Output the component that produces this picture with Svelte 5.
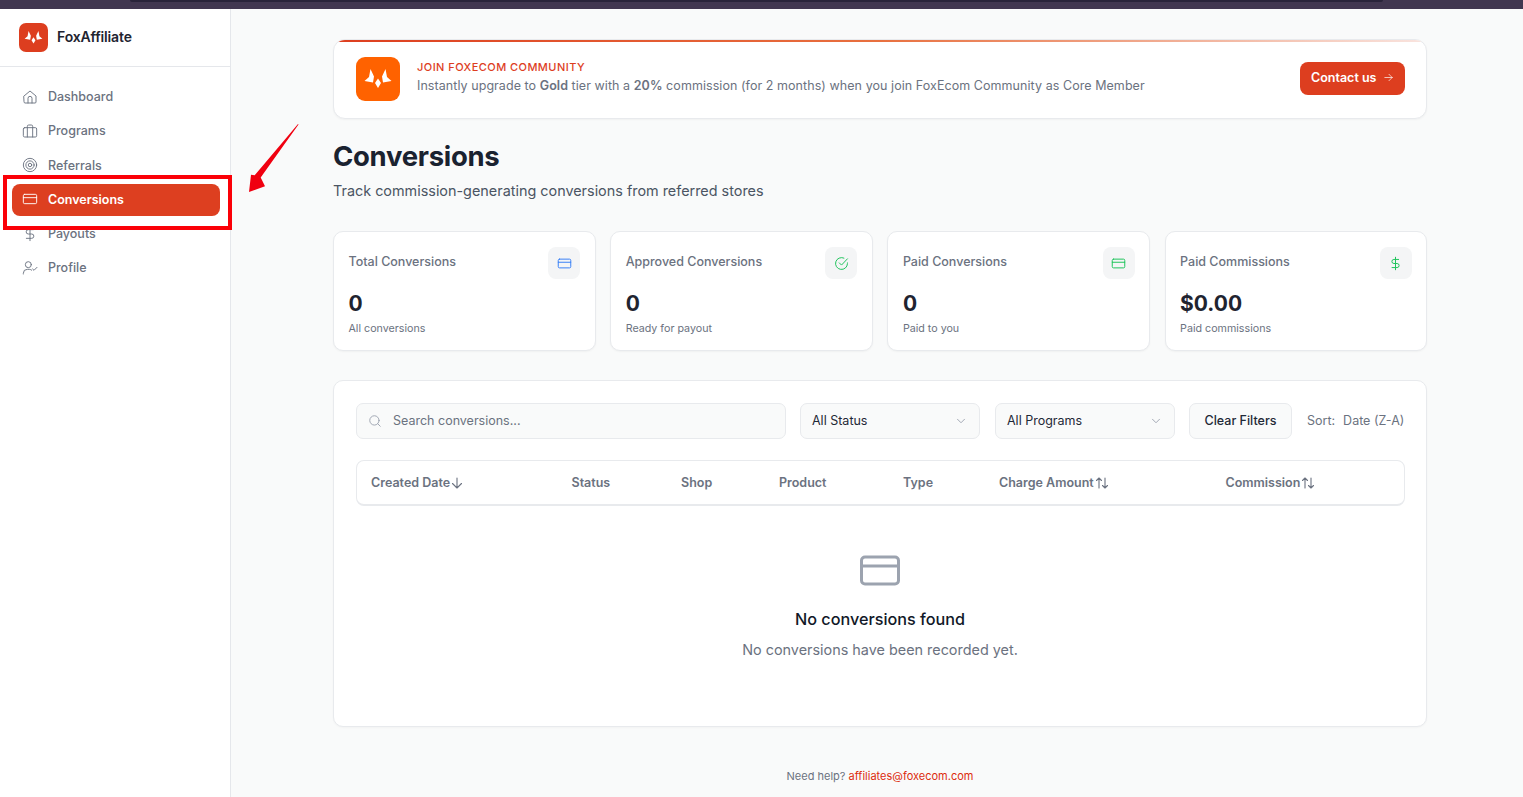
<script lang="ts">
  const nav = [
    { label: "Dashboard", icon: "home" },
    { label: "Programs", icon: "case" },
    { label: "Referrals", icon: "target" },
    { label: "Conversions", icon: "card", active: true },
    { label: "Payouts", icon: "dollar" },
    { label: "Profile", icon: "user" },
  ];

  const stats = [
    { title: "Total Conversions", value: "0", note: "All conversions", icon: "card", color: "#3b82f6" },
    { title: "Approved Conversions", value: "0", note: "Ready for payout", icon: "check", color: "#22c55e" },
    { title: "Paid Conversions", value: "0", note: "Paid to you", icon: "card", color: "#22c55e" },
    { title: "Paid Commissions", value: "$0.00", note: "Paid commissions", icon: "dollar", color: "#22c55e" },
  ];

  const columns = [
    { label: "Created Date", sort: "down", width: 200.5 },
    { label: "Status", width: 109.5 },
    { label: "Shop", width: 98 },
    { label: "Product", width: 124 },
    { label: "Type", width: 96 },
    { label: "Charge Amount", sort: "both", width: 226.5 },
    { label: "Commission", sort: "both", width: 150 },
  ];
</script>

{#snippet icon(name: string)}
  <svg viewBox="0 0 24 24" fill="none" stroke="currentColor" stroke-width="1.6" stroke-linecap="round" stroke-linejoin="round">
    {#if name === "home"}
      <path d="M3 10.500 12 3l9 7.500V19.500a1.500 1.500 0 0 1-1.500 1.500h-15A1.500 1.500 0 0 1 3 19.500z" />
      <path d="M9 21v-7a3 3 0 0 1 6 0v7" />
    {:else if name === "case"}
      <rect x="2" y="7" width="20" height="14" rx="2" />
      <path d="M8 21V5a2 2 0 0 1 2-2h4a2 2 0 0 1 2 2v16" />
    {:else if name === "target"}
      <circle cx="12" cy="12" r="10" />
      <circle cx="12" cy="12" r="6.200" />
      <circle cx="12" cy="12" r="2.600" />
    {:else if name === "card"}
      <rect x="2" y="5" width="20" height="14" rx="2" />
      <path d="M2 10h20" />
    {:else if name === "dollar"}
      <path d="M12 2v20" />
      <path d="M17 5.500H9.500a3.250 3.250 0 0 0 0 6.500h5a3.250 3.250 0 0 1 0 6.500H6.500" />
    {:else if name === "user"}
      <circle cx="9.500" cy="7" r="4.500" />
      <path d="M2 21v-1a6 6 0 0 1 6-6h3a6 6 0 0 1 3.500 1.200" />
      <path d="m16 13.500 2 2 4.500-4.500" />
    {:else if name === "check"}
      <path d="M21.500 11v1a9.500 9.500 0 1 1-5.600-8.700" />
      <path d="m8.500 11 3.500 3.500 9.500-10" />
    {/if}
  </svg>
{/snippet}

{#snippet foxMark()}
  <svg class="fox" viewBox="0 0 44 44" fill="#fff">
    <polygon points="14.500,12 18,19.500 17,25.500 8.500,24 13,20" />
    <polygon points="29.500,12 26,19.500 27,25.500 35.500,24 31,20" />
    <polygon points="22,21.500 25,26 22,31 19,26" />
  </svg>
{/snippet}

<div class="page">
  <div class="topbar"><div class="topbar-inner"></div></div>

  <div class="layout">
    <aside class="sidebar">
      <div class="brand">
        <div class="brand-logo">{@render foxMark()}</div>
        <span class="brand-name">FoxAffiliate</span>
      </div>
      <nav class="nav">
        {#each nav as item}
          <div class="nav-item" class:active={item.active}>
            {@render icon(item.icon)}
            <span>{item.label}</span>
          </div>
        {/each}
      </nav>
    </aside>

    <main class="main">
      <section class="banner">
        <div class="banner-logo">{@render foxMark()}</div>
        <div class="banner-text">
          <div class="banner-title">JOIN FOXECOM COMMUNITY</div>
          <div class="banner-desc">
            Instantly upgrade to <strong>Gold</strong> tier with a <strong>20%</strong> commission (for 2 months) when you join FoxEcom Community as Core Member
          </div>
        </div>
        <button class="contact">
          Contact us
          <svg viewBox="0 0 24 24" fill="none" stroke="currentColor" stroke-width="2" stroke-linecap="round" stroke-linejoin="round"><path d="M4 12h16M13 5l7 7-7 7" /></svg>
        </button>
      </section>

      <h1>Conversions</h1>
      <p class="subtitle">Track commission-generating conversions from referred stores</p>

      <section class="stats">
        {#each stats as s}
          <div class="stat">
            <div class="stat-head">
              <span class="stat-title">{s.title}</span>
              <div class="stat-icon" style="color: {s.color}">{@render icon(s.icon)}</div>
            </div>
            <div class="stat-value">{s.value}</div>
            <div class="stat-note">{s.note}</div>
          </div>
        {/each}
      </section>

      <section class="panel">
        <div class="filters">
          <div class="search">
            <svg viewBox="0 0 24 24" fill="none" stroke="currentColor" stroke-width="1.6" stroke-linecap="round"><circle cx="11" cy="11" r="8" /><path d="m21 21-4.300-4.300" /></svg>
            <span>Search conversions...</span>
          </div>
          <div class="select status">
            <span>All Status</span>
            <svg viewBox="0 0 24 24" fill="none" stroke="currentColor" stroke-width="1.600" stroke-linecap="round" stroke-linejoin="round"><path d="m6 9 6 6 6-6" /></svg>
          </div>
          <div class="select programs">
            <span>All Programs</span>
            <svg viewBox="0 0 24 24" fill="none" stroke="currentColor" stroke-width="1.600" stroke-linecap="round" stroke-linejoin="round"><path d="m6 9 6 6 6-6" /></svg>
          </div>
          <button class="clear">Clear Filters</button>
          <div class="sort"><span>Sort:</span><span>Date (Z-A)</span></div>
        </div>

        <div class="table-head">
          {#each columns as c}
            <div class="th" style="width: {c.width}px">
              <span>{c.label}</span>
              {#if c.sort === "down"}
                <svg viewBox="0 0 12 12" fill="none" stroke="currentColor" stroke-width="1.100" stroke-linecap="round" stroke-linejoin="round"><path d="M6 1v10M1.500 6.500 6 11l4.500-4.500" /></svg>
              {:else if c.sort === "both"}
                <svg class="both" viewBox="0 0 14 12" fill="none" stroke="currentColor" stroke-width="1.100" stroke-linecap="round" stroke-linejoin="round"><path d="M4 11V1M1.500 3.500 4 1l2.500 2.500M10 1v10M7.500 8.500 10 11l2.500-2.500" /></svg>
              {/if}
            </div>
          {/each}
        </div>

        <div class="empty">
          <svg viewBox="0 0 40 32" fill="none" stroke="#9ca3af" stroke-width="3" stroke-linejoin="round"><rect x="1.500" y="2" width="37" height="27" rx="3.500" /><path d="M1.500 11h37" /></svg>
          <div class="empty-title">No conversions found</div>
          <div class="empty-desc">No conversions have been recorded yet.</div>
        </div>
      </section>

      <footer class="help">Need help? <span>affiliates@foxecom.com</span></footer>
    </main>
  </div>

  <!-- annotation painted over the screenshot -->
  <div class="callout"></div>
  <svg class="arrow" viewBox="0 0 1523 797">
    <polygon fill="#f00010" points="249,192 251,174.700 254.700,175.300 298,124 298.500,124.500 260.700,177.500 265,186.300" />
  </svg>
</div>

<style>
  :global(body) {
    margin: 0;
    background: #f9fafa;
    font-family: Inter, "Liberation Sans", sans-serif;
  }
  .page {
    position: relative;
    height: 797px;
    overflow: hidden;
    color: #111827;
  }
  .topbar {
    height: 9px;
    background: #413750;
  }
  .topbar-inner {
    height: 2px;
    margin: 0 140px 0 130px;
    background: #29243a;
    border-radius: 0 0 6px 6px;
  }
  .layout {
    display: flex;
    height: 788px;
  }
  .sidebar {
    width: 230px;
    flex: none;
    background: #fff;
    border-right: 1px solid #e5e7eb;
  }
  .brand {
    display: flex;
    align-items: center;
    gap: 9px;
    padding-left: 19px;
    border-bottom: 1px solid #e5e7eb;
    box-sizing: border-box;
    height: 58px;
  }
  .brand-logo {
    width: 29px;
    height: 29px;
    border-radius: 7px;
    background: #dd3e1f;
    display: flex;
  }
  .brand-logo :global(.fox) {
    width: 29px;
    height: 29px;
  }
  .brand-name {
    font-size: 14px;
    font-weight: 600;
    color: #1f2430;
    letter-spacing: -0.15px;
    margin-bottom: 2px;
  }
  .nav {
    display: flex;
    flex-direction: column;
    gap: 2.300px;
    padding: 14px 10px 0 12px;
  }
  .nav-item {
    display: flex;
    align-items: center;
    gap: 10px;
    box-sizing: border-box;
    height: 32px;
    padding: 0 0 1px 10px;
    border-radius: 8px;
    font-size: 12.500px;
    font-weight: 500;
    color: #6b7280;
  }
  .nav-item svg {
    width: 16px;
    height: 16px;
    flex: none;
    stroke-width: 1.400;
  }
  .nav-item.active {
    background: #dd3f20;
    color: #fff;
    font-weight: 600;
  }
  .main {
    flex: 1;
    min-width: 0;
    padding: 30px 96px 0 102px;
  }
  .banner {
    position: relative;
    display: flex;
    align-items: center;
    height: 80px;
    box-sizing: border-box;
    padding: 0 21px 0 22px;
    background: #fff;
    border: 1px solid #e8eaed;
    border-radius: 12px;
    box-shadow: 0 1px 2px rgba(0, 0, 0, 0.04);
    overflow: hidden;
  }
  .banner::before {
    content: "";
    position: absolute;
    left: 0;
    right: 0;
    top: 0;
    height: 2px;
    background: linear-gradient(90deg, #dd3e1f, #e8703f 50%, #f9e4df);
  }
  .banner-logo {
    width: 44px;
    height: 44px;
    flex: none;
    border-radius: 9px;
    background: #ff6200;
    display: flex;
  }
  .banner-text {
    flex: 1;
    margin-left: 17px;
    margin-bottom: 5px;
  }
  .banner-title {
    font-size: 11px;
    font-weight: 500;
    letter-spacing: 0.44px;
    color: #dd3e1f;
    line-height: 14px;
    margin-bottom: 3px;
  }
  .banner-desc {
    font-size: 12.500px;
    line-height: 17px;
    color: #6b7280;
    letter-spacing: 0.06px;
  }
  .banner-desc strong {
    font-weight: 600;
  }
  .contact {
    display: flex;
    align-items: center;
    gap: 6px;
    width: 105px;
    height: 33px;
    margin-bottom: 2px;
    padding: 0 0 2px 11px;
    border: 0;
    border-radius: 8px;
    background: #dd3e1f;
    color: #fff;
    font: 600 12.500px Inter, "Liberation Sans", sans-serif;
  }
  .contact svg {
    width: 11px;
    height: 11px;
    stroke-width: 1.500;
  }
  h1 {
    margin: 20px 0 0;
    font-size: 27.500px;
    line-height: 34px;
    font-weight: 700;
    letter-spacing: -0.3px;
    color: #1a2230;
  }
  .subtitle {
    margin: 8px 0 0;
    font-size: 14.400px;
    line-height: 20px;
    color: #4b5563;
  }
  .stats {
    display: grid;
    grid-template-columns: repeat(3, 262.800px) 1fr;
    gap: 14.400px;
    margin-top: 30px;
  }
  .stat {
    height: 120px;
    box-sizing: border-box;
    padding: 15px 14.500px 0 14.500px;
    background: #fff;
    border: 1px solid #e8eaed;
    border-radius: 10px;
    box-shadow: 0 1px 2px rgba(0, 0, 0, 0.04);
  }
  .stat-head {
    display: flex;
    justify-content: space-between;
    align-items: center;
  }
  .stat-title {
    font-size: 12.500px;
    font-weight: 500;
    color: #6b7280;
    margin-bottom: 3px;
  }
  .stat-icon {
    width: 32px;
    height: 32px;
    border-radius: 8px;
    background: #f4f5f6;
    display: flex;
    align-items: center;
    justify-content: center;
  }
  .stat-icon svg {
    width: 15px;
    height: 15px;
  }
  .stat-value {
    margin-top: 11px;
    font-size: 21px;
    line-height: 28px;
    font-weight: 700;
    color: #1f2430;
  }
  .stat-note {
    margin-top: 4px;
    font-size: 10.700px;
    line-height: 14px;
    color: #6b7280;
  }
  .panel {
    margin-top: 29px;
    height: 347px;
    box-sizing: border-box;
    padding: 22px;
    background: #fff;
    border: 1px solid #e8eaed;
    border-radius: 10px;
    box-shadow: 0 1px 2px rgba(0, 0, 0, 0.03);
  }
  .filters {
    display: flex;
    align-items: center;
    height: 36px;
  }
  .filters > * {
    flex: none;
  }
  .search,
  .select,
  .clear {
    display: flex;
    align-items: center;
    box-sizing: border-box;
    height: 36px;
    padding-bottom: 1px;
    background: #f9fafa;
    border: 1px solid #e8eaed;
    border-radius: 7px;
    font-size: 12.500px;
  }
  .search {
    width: 430px;
    padding-left: 11px;
    gap: 11px;
    color: #6b7280;
  }
  .search svg {
    width: 14px;
    height: 14px;
    color: #9ca3af;
  }
  .select {
    justify-content: space-between;
    padding: 0 11px 1px;
    margin-left: 14px;
    color: #1f2937;
  }
  .select svg {
    width: 14px;
    height: 14px;
    color: #9ca3af;
  }
  .status {
    width: 180px;
  }
  .programs {
    width: 180px;
    margin-left: 15px;
  }
  .clear {
    margin-left: 14px;
    width: 103px;
    justify-content: center;
    padding: 0 0 1px;
    color: #1f2937;
    font-family: inherit;
    font-weight: 500;
  }
  .sort {
    display: flex;
    gap: 8px;
    margin-left: 15px;
    padding-bottom: 1px;
    font-size: 12.500px;
    color: #6b7280;
    white-space: nowrap;
  }
  .table-head {
    display: flex;
    align-items: center;
    margin: 21px -1px 0 0;
    height: 46px;
    box-sizing: border-box;
    padding-left: 14px;
    background: #fff;
    border: 1px solid #e8eaed;
    border-bottom-width: 2px;
    border-radius: 8px;
    font-size: 12.500px;
    font-weight: 600;
    color: #6b7280;
  }
  .th {
    display: flex;
    align-items: center;
    gap: 1px;
    flex: none;
  }
  .th svg {
    width: 12px;
    height: 12px;
  }
  .th svg.both {
    width: 14px;
  }
  .empty {
    display: flex;
    flex-direction: column;
    align-items: center;
    margin-top: 49px;
  }
  .empty svg {
    width: 40px;
    height: 32px;
  }
  .empty-title {
    margin-top: 21px;
    font-size: 16.200px;
    line-height: 22px;
    font-weight: 500;
    color: #111827;
  }
  .empty-desc {
    margin-top: 10px;
    font-size: 14.400px;
    line-height: 20px;
    color: #6b7280;
  }
  .help {
    margin-top: 42px;
    text-align: center;
    font-size: 11px;
    line-height: 14px;
    color: #6b7280;
  }
  .help span {
    color: #dd2c0e;
  }
  .callout {
    position: absolute;
    left: 3px;
    top: 175px;
    width: 229px;
    height: 55px;
    box-sizing: border-box;
    border: 4px solid #fb0007;
  }
  .arrow {
    position: absolute;
    inset: 0;
    width: 1523px;
    height: 797px;
    pointer-events: none;
  }
</style>
